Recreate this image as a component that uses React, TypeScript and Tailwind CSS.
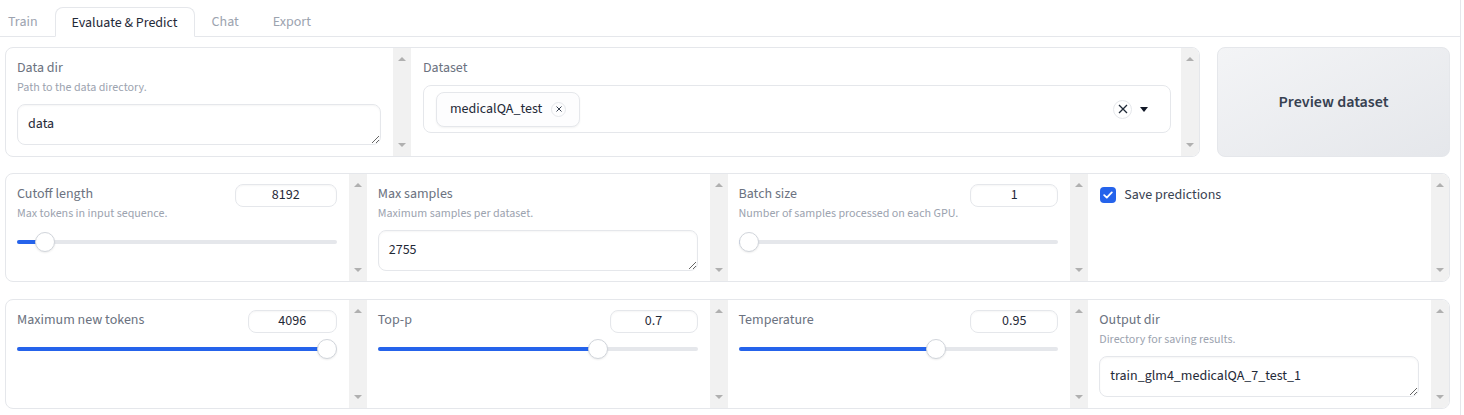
import React from "react";

function ScrollCol() {
  return (
    <div className="w-[18px] shrink-0 bg-[#f1f1f1] flex flex-col justify-between items-center py-[9px]">
      <div className="w-0 h-0 border-x-[4px] border-x-transparent border-b-[4px] border-b-[#b0b0b0]" />
      <div className="w-0 h-0 border-x-[4px] border-x-transparent border-t-[4px] border-t-[#b0b0b0]" />
    </div>
  );
}

function Label({ text, info }: { text: string; info?: string }) {
  return (
    <div>
      <div className="text-[14px] leading-5 text-[#6b7280]">{text}</div>
      {info && <div className="text-[12px] leading-4 mt-[2px] text-[#9ca3af]">{info}</div>}
    </div>
  );
}

function NumBox({ value, w }: { value: string; w: string }) {
  return (
    <div
      className={`${w} h-[23px] shrink-0 border border-[#e5e7eb] rounded-lg flex items-center justify-center text-[14px] text-[#1f2937] shadow-[inset_0_1px_2px_rgba(0,0,0,0.04)]`}
    >
      {value}
    </div>
  );
}

function Slider({ p }: { p: number }) {
  // p: 0..1 thumb position
  const pct = p * 100;
  return (
    <div className="relative h-5">
      <div className="absolute left-0 right-0 top-[8px] h-[4px] rounded-full bg-[#e5e7eb]" />
      <div className="absolute left-[10px] right-[10px] top-0 h-5">
        <div
          className="absolute left-[-10px] top-[8px] h-[4px] rounded-full bg-[#2563eb]"
          style={{ width: `calc(${pct}% + 10px)` }}
        />
        <div
          className="absolute top-0 w-5 h-5 -ml-[10px] rounded-full bg-white border border-[#d1d5db] shadow-[0_1px_2px_rgba(0,0,0,0.08)]"
          style={{ left: `${pct}%` }}
        />
      </div>
    </div>
  );
}

function TextBox({ value }: { value: string }) {
  return (
    <textarea
      readOnly
      value={value}
      rows={1}
      className="block w-full h-[41px] resize-y border border-[#e5e7eb] rounded-lg px-[10px] py-[9px] text-[14px] leading-5 text-[#1f2937] bg-white shadow-[inset_0_1px_2px_rgba(0,0,0,0.04)] outline-none overflow-hidden"
    />
  );
}

function SliderPanel({ label, info, value, w, p, gap }: { label: string; info?: string; value: string; w: string; p: number; gap: string }) {
  return (
    <div className="flex-1 min-w-0 pl-[11px] pr-3 pt-[10px]">
      <div className="flex justify-between items-start">
        <Label text={label} info={info} />
        <NumBox value={value} w={w} />
      </div>
      <div className={gap}>
        <Slider p={p} />
      </div>
    </div>
  );
}

function TextPanel({ label, info, value }: { label: string; info?: string; value: string }) {
  return (
    <div className="flex-1 min-w-0 pl-[11px] pr-3 pt-[10px]">
      <Label text={label} info={info} />
      <div className="mt-[8px]">
        <TextBox value={value} />
      </div>
    </div>
  );
}

function Cell({ children }: { children: React.ReactNode }) {
  return (
    <div className="flex min-w-0">
      {children}
      <ScrollCol />
    </div>
  );
}

export default function App() {
  const tabs = ["Train", "Evaluate & Predict", "Chat", "Export"];
  return (
    <div className="w-[1461px] h-[415px] bg-white font-[family-name:'Source_Sans_3',Lato,sans-serif] border-r border-[#e5e7eb]">
      {/* tabs */}
      <div className="flex items-end h-[37px] border-b border-[#e5e7eb] pl-2">
        {tabs.map((t, i) =>
          i === 1 ? (
            <div
              key={t}
              className="h-[30px] -mb-px px-4 pt-[2px] border border-[#e5e7eb] border-b-white rounded-t-lg bg-white flex items-center text-[14px] text-[#1f2937]"
            >
              {t}
            </div>
          ) : (
            <div
              key={t}
              className={`h-[30px] pt-[2px] flex items-center text-[14px] text-[#9ca3af] ${i === 0 ? "pr-[17px]" : "px-[17px]"}`}
            >
              {t}
            </div>
          )
        )}
      </div>

      <div className="pl-[5px] pt-[10px] flex flex-col">
        {/* row 1 */}
        <div className="flex gap-[17px] h-[110px]">
          <div className="w-[1195px] border border-[#e5e7eb] rounded-lg flex overflow-hidden">
            <div className="w-[387px] shrink-0 flex">
              <TextPanel label="Data dir" info="Path to the data directory." value="data" />
            </div>
            <ScrollCol />
            <div className="flex-1 min-w-0 pl-3 pr-[10px] pt-[10px]">
              <Label text="Dataset" />
              <div className="mt-[7px] h-[48px] border border-[#e5e7eb] rounded-lg flex items-center pl-3 pr-[22px]">
                <div className="h-[35px] px-[13px] border border-[#e5e7eb] rounded-lg shadow-[0_1px_2px_rgba(0,0,0,0.05)] bg-[#fdfdfe] flex items-center gap-[9px] text-[14px] text-[#1f2937]">
                  <span>medicalQA_test</span>
                  <span className="w-[15px] h-[15px] rounded-full border border-[#e5e7eb] flex items-center justify-center">
                    <svg width="6" height="6" viewBox="0 0 6 6" stroke="#374151" strokeWidth="1">
                      <path d="M0.5 0.5 L5.5 5.5 M5.5 0.5 L0.5 5.5" />
                    </svg>
                  </span>
                </div>
                <div className="flex-1" />
                <span className="w-[19px] h-[19px] rounded-full border border-[#e5e7eb] flex items-center justify-center">
                  <svg width="10" height="10" viewBox="0 0 10 10" stroke="#1f2937" strokeWidth="1.3">
                    <path d="M1 1 L9 9 M9 1 L1 9" />
                  </svg>
                </span>
                <svg className="ml-[8px]" width="8" height="5" viewBox="0 0 8 5">
                  <path d="M0 0 H8 L4 5 Z" fill="#111827" />
                </svg>
              </div>
            </div>
            <ScrollCol />
          </div>
          <div className="w-[233px] rounded-lg border border-[#e5e7eb] bg-gradient-to-br from-[#f3f4f6] to-[#e5e7eb] flex items-center justify-center text-[16px] font-semibold text-[#374151]">
            Preview dataset
          </div>
        </div>

        {/* row 2 */}
        <div className="mt-4 w-[1445px] h-[109px] border border-[#e5e7eb] rounded-lg grid grid-cols-4 overflow-hidden">
          <Cell>
            <SliderPanel label="Cutoff length" info="Max tokens in input sequence." value="8192" w="w-[102px]" p={0.06} gap="mt-[10px]" />
          </Cell>
          <Cell>
            <TextPanel label="Max samples" info="Maximum samples per dataset." value="2755" />
          </Cell>
          <Cell>
            <SliderPanel label="Batch size" info="Number of samples processed on each GPU." value="1" w="w-[88px]" p={0} gap="mt-[10px]" />
          </Cell>
          <Cell>
            <div className="flex-1 min-w-0 pl-[12px] pr-3 pt-[11px]">
              <div className="flex items-center gap-2">
                <span className="w-4 h-4 rounded-[4px] bg-[#2563eb] flex items-center justify-center">
                  <svg width="10" height="8" viewBox="0 0 10 8" fill="none" stroke="white" strokeWidth="1.8" strokeLinecap="round" strokeLinejoin="round">
                    <path d="M1.2 4.2 L3.8 6.6 L8.8 1.4" />
                  </svg>
                </span>
                <span className="text-[14px] leading-5 text-[#374151]">Save predictions</span>
              </div>
            </div>
          </Cell>
        </div>

        {/* row 3 */}
        <div className="mt-[17px] w-[1445px] h-[110px] border border-[#e5e7eb] rounded-lg grid grid-cols-4 overflow-hidden">
          <Cell>
            <SliderPanel label="Maximum new tokens" value="4096" w="w-[89px]" p={1} gap="mt-[6px]" />
          </Cell>
          <Cell>
            <SliderPanel label="Top-p" value="0.7" w="w-[88px]" p={0.7} gap="mt-[6px]" />
          </Cell>
          <Cell>
            <SliderPanel label="Temperature" value="0.95" w="w-[88px]" p={0.625} gap="mt-[6px]" />
          </Cell>
          <Cell>
            <TextPanel label="Output dir" info="Directory for saving results." value="train_glm4_medicalQA_7_test_1" />
          </Cell>
        </div>
      </div>
    </div>
  );
}
